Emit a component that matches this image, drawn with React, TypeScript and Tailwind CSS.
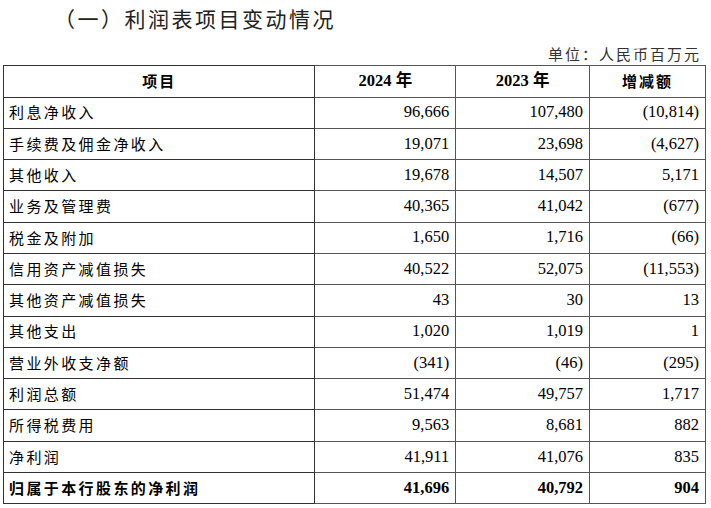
const rows: Array<[string, string, string, string]> = [
  ["利息净收入", "96,666", "107,480", "(10,814)"],
  ["手续费及佣金净收入", "19,071", "23,698", "(4,627)"],
  ["其他收入", "19,678", "14,507", "5,171"],
  ["业务及管理费", "40,365", "41,042", "(677)"],
  ["税金及附加", "1,650", "1,716", "(66)"],
  ["信用资产减值损失", "40,522", "52,075", "(11,553)"],
  ["其他资产减值损失", "43", "30", "13"],
  ["其他支出", "1,020", "1,019", "1"],
  ["营业外收支净额", "(341)", "(46)", "(295)"],
  ["利润总额", "51,474", "49,757", "1,717"],
  ["所得税费用", "9,563", "8,681", "882"],
  ["净利润", "41,911", "41,076", "835"],
];

const cjk = "font-['Noto_Sans_CJK_SC',sans-serif]";
const num = "font-['Liberation_Serif','Noto_Sans_CJK_SC',serif]";

export default function App() {
  return (
    <div className="h-[508px] w-[711px] bg-white text-black">
      <h1
        className={`${cjk} pl-[54px] pt-[4px] text-[21px] leading-[28px] tracking-[2.5px] text-[#222]`}
      >
        （一）利润表项目变动情况
      </h1>

      <p
        className={`${cjk} mt-[12px] pr-[10px] text-right text-[15px] leading-[20px] tracking-[2px] text-[#333]`}
      >
        单位：人民币百万元
      </p>

      <table className="ml-[3px] mt-[1px] w-[703px] border-collapse border-[1.5px] border-[#222]">
        <colgroup>
          <col className="w-[312px]" />
          <col className="w-[141px]" />
          <col className="w-[134px]" />
          <col className="w-[116px]" />
        </colgroup>
        <thead>
          <tr className="h-[31.5px]">
            <th className={`${cjk} border border-[#333] text-[15px] font-bold tracking-[2px]`}>
              项目
            </th>
            <th className={`${num} border border-[#555] text-[16.5px] font-bold`}>
              2024 年
            </th>
            <th className={`${num} border border-[#555] text-[16.5px] font-bold`}>
              2023 年
            </th>
            <th className={`${cjk} border border-[#555] text-[15px] font-bold tracking-[2px]`}>
              增减额
            </th>
          </tr>
        </thead>
        <tbody>
          {rows.map(([label, a, b, c]) => (
            <tr key={label} className="h-[31.3px]">
              <td
                className={`${cjk} border border-[#333] pl-[5px] text-left text-[15px] tracking-[2.4px]`}
              >
                {label}
              </td>
              <td className={`${num} border border-[#555] pr-[6px] text-right text-[16.5px]`}>
                {a}
              </td>
              <td className={`${num} border border-[#555] pr-[6px] text-right text-[16.5px]`}>
                {b}
              </td>
              <td className={`${num} border border-[#555] pr-[6px] text-right text-[16.5px]`}>
                {c}
              </td>
            </tr>
          ))}
          <tr className="h-[31.3px] font-bold">
            <td
              className={`${cjk} border border-[#333] pl-[5px] text-left text-[15px] tracking-[2.4px]`}
            >
              归属于本行股东的净利润
            </td>
            <td className={`${num} border border-[#555] pr-[6px] text-right text-[16.5px]`}>
              41,696
            </td>
            <td className={`${num} border border-[#555] pr-[6px] text-right text-[16.5px]`}>
              40,792
            </td>
            <td className={`${num} border border-[#555] pr-[6px] text-right text-[16.5px]`}>
              904
            </td>
          </tr>
        </tbody>
      </table>
    </div>
  );
}
